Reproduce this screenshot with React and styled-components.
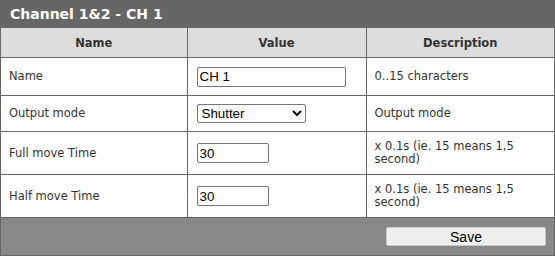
import React from 'react';
import styled, { createGlobalStyle } from 'styled-components';

const GlobalStyle = createGlobalStyle`
  html, body {
    margin: 0;
    padding: 0;
    background: #fff;
  }
`;

// Outer panel - dark frame around title, table and footer
const Panel = styled.div`
  width: 555px;
  height: 256px;
  box-sizing: border-box;
  border: 1px solid #666;
  background: #fff;
  font-family: 'DejaVu Sans', Verdana, sans-serif;
  display: flex;
  flex-direction: column;
`;

const Title = styled.div`
  height: 26px;
  background: #666;
  color: #fff;
  font-weight: bold;
  font-size: 14px;
  line-height: 26px;
  padding-left: 9px;
`;

const Table = styled.table`
  width: 100%;
  border-collapse: collapse;
  table-layout: fixed;
  font-size: 11.5px;
  color: #333;
`;

const HeadCell = styled.th`
  height: 29px;
  padding: 0 8px;
  background: #ddd;
  font-weight: bold;
  text-align: center;
  border-top: 1px solid #666;
  border-left: 1px solid #666;
  &:first-child {
    border-left: none;
  }
`;

const Cell = styled.td`
  height: ${({ h }) => h}px;
  padding: 0 8px;
  vertical-align: middle;
  line-height: 13px;
  border-top: 1px solid #666;
  border-left: 1px solid #666;
  &:first-child {
    border-left: none;
  }
`;

const TextInput = styled.input`
  box-sizing: border-box;
  width: ${({ w }) => w}px;
  height: 20px;
  margin: 0 0 0 1px;
  padding: 1px 2px;
  border: 1px solid #767676;
  border-radius: 2px;
  font-family: 'Liberation Sans', Arial, sans-serif;
  font-size: 13.33px;
  color: #000;
  display: block;
`;

const Select = styled.select`
  box-sizing: border-box;
  width: 109px;
  height: 19px;
  margin: 0 0 0 1px;
  border: 1px solid #767676;
  border-radius: 2px;
  font-family: 'Liberation Sans', Arial, sans-serif;
  font-size: 13.33px;
  color: #000;
  background: #fff;
  display: block;
`;

const Footer = styled.div`
  flex: 1;
  background: #888;
  border-top: 1px solid #666;
  display: flex;
  justify-content: flex-end;
  align-items: flex-start;
  padding: 9px 8px 0 0;
`;

const SaveButton = styled.button`
  box-sizing: border-box;
  width: 160px;
  height: 19px;
  padding: 0;
  background: #eee;
  border: 1px solid #c8c8c8;
  border-radius: 2px;
  font-family: 'Liberation Sans', Arial, sans-serif;
  font-size: 14px;
  color: #000;
`;

const rows = [
  { name: 'Name', h: 37, field: <TextInput w={149} defaultValue="CH 1" />, desc: '0..15 characters' },
  {
    name: 'Output mode',
    h: 35,
    field: (
      <Select defaultValue="Shutter">
        <option>Shutter</option>
        <option>Switch</option>
      </Select>
    ),
    desc: 'Output mode',
  },
  { name: 'Full move Time', h: 42, field: <TextInput w={72} defaultValue="30" />, desc: 'x 0.1s (ie. 15 means 1,5 second)' },
  { name: 'Half move Time', h: 42, field: <TextInput w={72} defaultValue="30" />, desc: 'x 0.1s (ie. 15 means 1,5 second)' },
];

export default function App() {
  return (
    <>
      <GlobalStyle />
      <Panel>
        <Title>Channel 1&amp;2 - CH 1</Title>
        <Table>
          <colgroup>
            <col style={{ width: 186 }} />
            <col style={{ width: 179 }} />
            <col style={{ width: 188 }} />
          </colgroup>
          <thead>
            <tr>
              <HeadCell>Name</HeadCell>
              <HeadCell>Value</HeadCell>
              <HeadCell>Description</HeadCell>
            </tr>
          </thead>
          <tbody>
            {rows.map((r) => (
              <tr key={r.name}>
                <Cell h={r.h}>{r.name}</Cell>
                <Cell h={r.h}>{r.field}</Cell>
                <Cell h={r.h}>{r.desc}</Cell>
              </tr>
            ))}
          </tbody>
        </Table>
        <Footer>
          <SaveButton>Save</SaveButton>
        </Footer>
      </Panel>
    </>
  );
}
